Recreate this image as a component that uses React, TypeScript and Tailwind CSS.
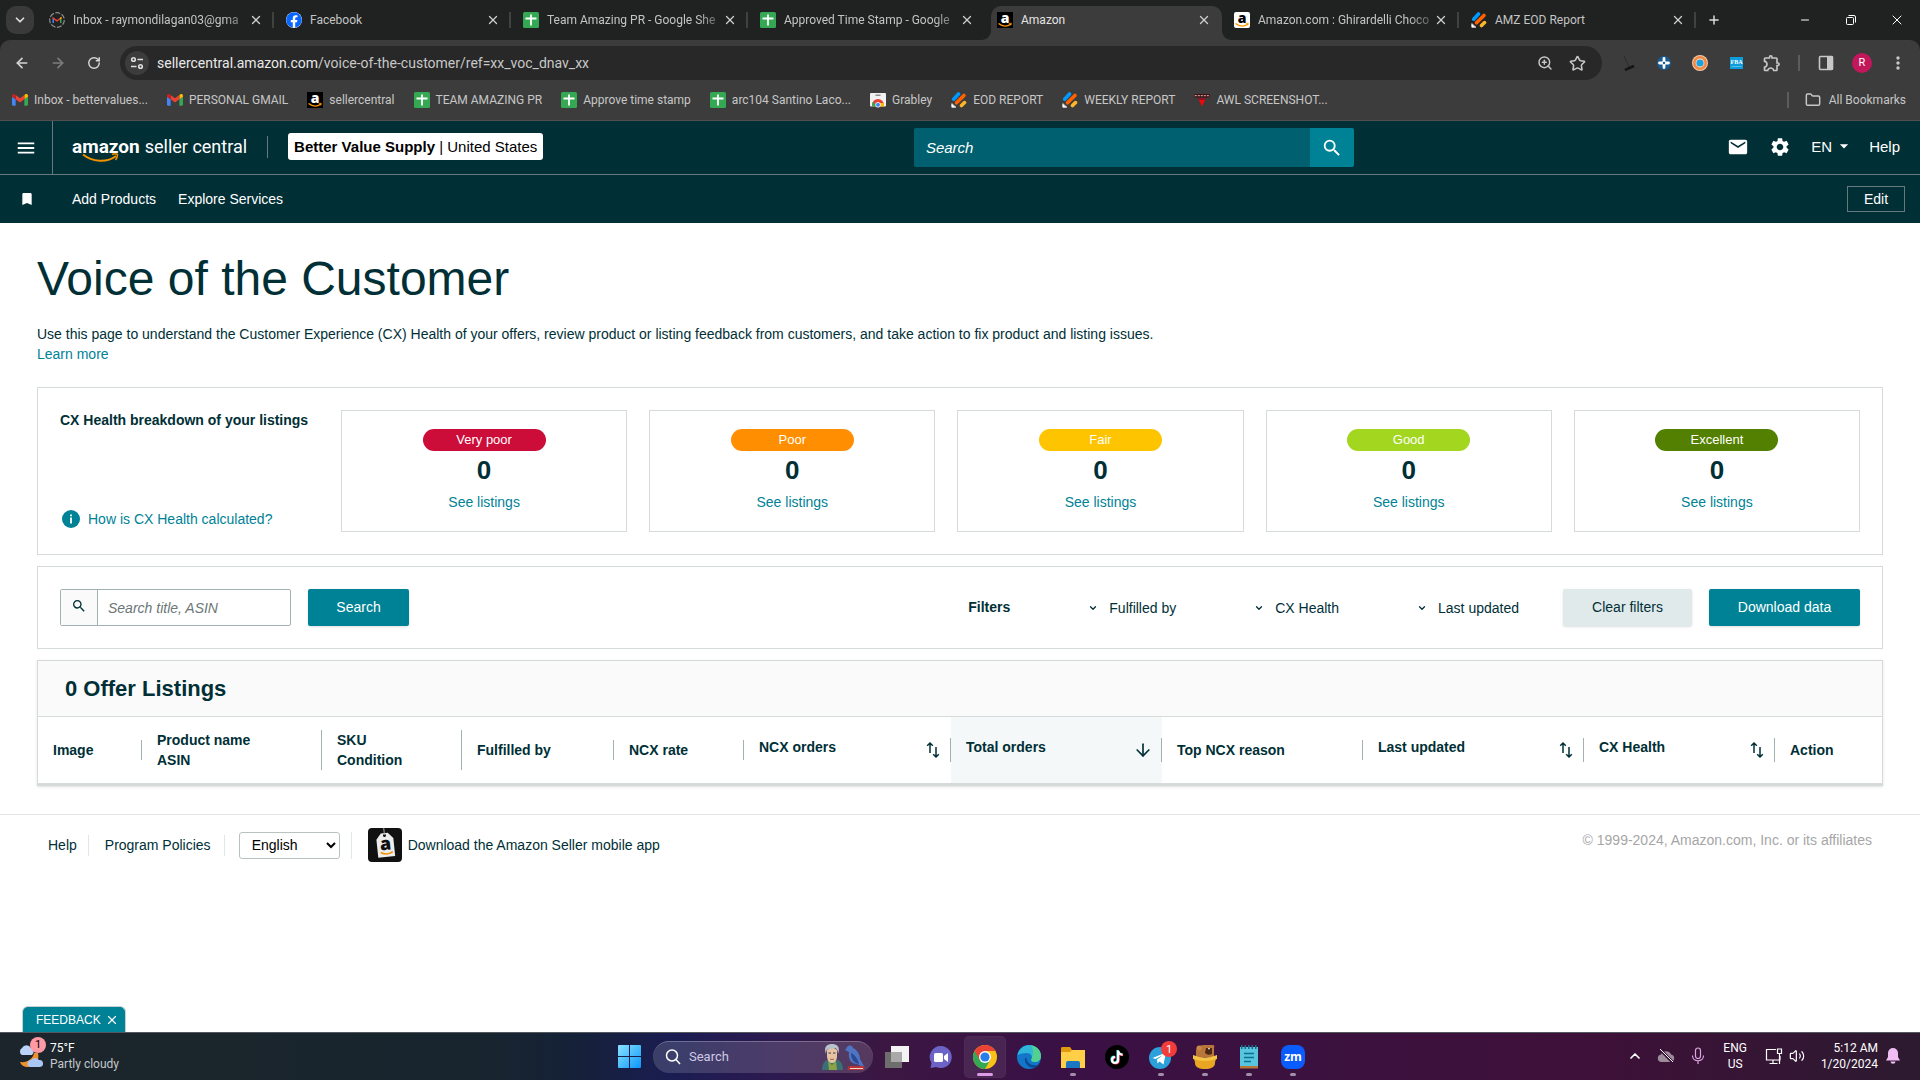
import type { ReactNode } from "react";
import {
  ArrowDown,
  ArrowLeft,
  ArrowRight,
  ChevronDown,
  ChevronUp,
  Folder,
  Minus,
  Plus,
  RotateCw,
  Star,
  Volume2,
  X,
  ZoomIn,
} from "lucide-react";
import {
  MdArrowDropDown,
  MdBookmark,
  MdMail,
  MdMenu,
  MdMoreVert,
  MdOutlineExtension,
  MdSearch,
  MdSettings,
} from "react-icons/md";
import { FaFacebook } from "react-icons/fa";

/* ---------- site icons ---------- */

function GmailIcon() {
  return (
    <svg viewBox="0 0 24 24" className="size-4 shrink-0" aria-hidden="true">
      <path fill="#4285f4" d="M0 7v11.9c0 .9.7 1.6 1.6 1.6h3.9V11z" />
      <path fill="#34a853" d="M18.5 20.5h3.9c.9 0 1.6-.7 1.6-1.6V7l-5.5 4z" />
      <path fill="#fbbc04" d="M18.5 4.4V11L24 7V5.4c0-2-2.3-3.2-3.9-2z" />
      <path fill="#ea4335" d="M5.5 11V4.4l6.5 4.9 6.5-4.9V11L12 15.9z" />
      <path fill="#c5221f" d="M0 5.4V7l5.5 4V4.4L3.9 3.4C2.3 2.2 0 3.3 0 5.4z" />
    </svg>
  );
}

function LoadingGmailIcon() {
  return (
    <svg viewBox="0 0 16 16" className="size-4 shrink-0" aria-hidden="true">
      <circle cx="8" cy="8" r="7.3" fill="none" stroke="#8b8b8b" strokeWidth="1.2" strokeDasharray="5 1.5" />
      <path fill="#4285f4" d="M3.5 6v5H5V7z" />
      <path fill="#34a853" d="M11 11h1.5V6L11 7z" />
      <path fill="#ea4335" d="M3.5 4.8L8 8l4.5-3.2v1.7L8 9.8 3.5 6.5z" />
      <path fill="#fbbc04" d="M11 5.9v1.7l1.5-1.1V4.8z" />
    </svg>
  );
}

function FacebookIcon() {
  return (
    <span className="flex size-4 shrink-0 rounded-full bg-white">
      <FaFacebook className="size-4 text-[#0866ff]" />
    </span>
  );
}

function SheetsIcon() {
  return (
    <svg viewBox="0 0 16 16" className="size-4 shrink-0" aria-hidden="true">
      <rect width="16" height="16" rx="1.5" fill="#34a853" />
      <path d="M8 2.5v11M2.500 6.500h11" stroke="#fff" strokeWidth="1.8" />
    </svg>
  );
}

function AmazonIcon({ light = false }: { light?: boolean }) {
  return (
    <svg viewBox="0 0 16 16" className="size-4 shrink-0" aria-hidden="true">
      <rect width="16" height="16" rx={light ? 2 : 0} fill={light ? "#fff" : "#000"} />
      <text x="8" y="10.5" textAnchor="middle" fontFamily="Open Sans" fontWeight="800" fontSize="14" fill={light ? "#000" : "#fff"}>
        a
      </text>
      <path d="M2 11.8c3.500 3 8.500 3 11.500.5" stroke="#ff9900" strokeWidth="1.4" fill="none" strokeLinecap="round" />
      <path d="M11.8 11.5l2.500-.3-.5 2.300" stroke="#ff9900" strokeWidth=".8" fill="none" />
    </svg>
  );
}

function JotformIcon() {
  return (
    <svg viewBox="0 0 16 16" className="size-4 shrink-0" aria-hidden="true" strokeLinecap="round">
      <path d="M2.7 7.2L7.5 2" stroke="#0099ff" strokeWidth="3.6" />
      <path d="M5.5 10.8L13 3.500" stroke="#ff6100" strokeWidth="3.6" />
      <path d="M10.5 13.6l3-3" stroke="#ffb629" strokeWidth="3.6" />
      <path d="M.8 12v3.2H4.5z" fill="#fff" stroke="#fff" strokeWidth=".8" />
    </svg>
  );
}

function WebStoreIcon() {
  return (
    <svg viewBox="0 0 16 16" className="size-4 shrink-0" aria-hidden="true">
      <rect y="1" width="16" height="13.5" rx="1" fill="#f1f1f1" />
      <path d="M5.5 3.2h5" stroke="#777" strokeWidth="1.2" />
      <path d="M2 14.5V13a6 6 0 0 1 12 0v1.500z" fill="#e94235" />
      <path d="M2 14.5V13q0-2 1-3.500l3.500 5z" fill="#34a853" />
      <path d="M14 14.5V13q0-1-.5-2H9v3.500z" fill="#fbbc04" />
      <circle cx="8" cy="12.8" r="2.400" fill="#4285f4" stroke="#fff" strokeWidth=".8" />
    </svg>
  );
}

function FlagIcon() {
  return (
    <svg viewBox="0 0 16 16" className="size-4 shrink-0" aria-hidden="true">
      <path d="M.5 2h15v3.500h-15z" fill="#3a1013" />
      <path d="M.8 3.600h14.500" stroke="#d09a9a" strokeWidth="1.2" strokeDasharray="2 1" />
      <path d="M3.500 6h9l-1.200 2H4.700z" fill="#8e1523" />
      <path d="M5 8h6l-3 6.500z" fill="#f00808" />
    </svg>
  );
}

function SortIcon() {
  return (
    <svg viewBox="0 0 14 18" className="h-[18px] w-3.5" fill="none" stroke="#002f36" strokeWidth="1.5" aria-hidden="true">
      <path d="M4 12V2M1.200 4.800L4 2l2.800 2.800M10 6v10M7.200 13.200L10 16l2.800-2.800" />
    </svg>
  );
}

/* ---------- browser chrome ---------- */

type Tab = { title: string; icon: ReactNode; active?: boolean; line?: boolean; fade?: boolean };

const tabs: Tab[] = [
  { title: "Inbox - raymondilagan03@gma", icon: <LoadingGmailIcon />, line: true, fade: true },
  { title: "Facebook", icon: <FacebookIcon />, line: true },
  { title: "Team Amazing PR - Google She", icon: <SheetsIcon />, line: true, fade: true },
  { title: "Approved Time Stamp - Google", icon: <SheetsIcon />, fade: true },
  { title: "Amazon", icon: <AmazonIcon />, active: true },
  { title: "Amazon.com : Ghirardelli Choco", icon: <AmazonIcon light />, line: true, fade: true },
  { title: "AMZ EOD Report", icon: <JotformIcon />, line: true },
];

function TabFoot({ flip = false }: { flip?: boolean }) {
  return (
    <svg
      viewBox="0 0 10 10"
      className={flip ? "absolute bottom-0 left-full size-2.5 -scale-x-100" : "absolute right-full bottom-0 size-2.5"}
      aria-hidden="true"
    >
      <path d="M10 0v10H0C6 10 10 6 10 0z" fill="#3c3c3c" />
    </svg>
  );
}

function TabStrip() {
  return (
    <div className="flex h-10 items-end bg-[#1f2220] pl-1.5">
      <button aria-label="Search tabs" className="mb-1.5 flex size-7 shrink-0 items-center justify-center rounded-[10px] bg-[#3a3a3a]">
        <ChevronDown className="size-3.5 text-[#dedede]" strokeWidth={3} />
      </button>
      <div className="ml-[5px] flex min-w-0">
        {tabs.map((t) => (
          <div key={t.title} className="w-[237px] min-w-0 pr-0.5 pl-1">
            <div className={`relative flex h-[34px] items-center pb-1.5 pl-1.5 ${t.active ? "rounded-t-[10px] bg-[#3c3c3c]" : ""}`}>
              {t.active && <TabFoot />}
              {t.active && <TabFoot flip />}
              {t.icon}
              <span
                className={`ml-2 flex-1 whitespace-nowrap ${t.active ? "text-[#e3e3e3]" : "text-[#c4c4c4]"} ${t.fade ? "[mask-image:linear-gradient(to_right,black_86%,rgba(0,0,0,0.25))]" : ""}`}
              >
                {t.title}
              </span>
              <button aria-label={`Close ${t.title}`} className="mr-2 flex size-4 shrink-0 items-center justify-center">
                <X className="size-3.5 text-[#d0d0d0]" strokeWidth={2.2} />
              </button>
              <span className={`h-4 w-0.5 ${t.line ? "bg-[#404240]" : "bg-transparent"}`} />
            </div>
          </div>
        ))}
      </div>
      <button aria-label="New tab" className="mb-1.5 ml-0.5 flex size-7 items-center justify-center">
        <Plus className="size-3.5 text-[#dedede]" strokeWidth={2.5} />
      </button>
      <div className="ml-auto flex h-10 text-white">
        <button aria-label="Minimize" className="flex w-[46px] items-center justify-center">
          <Minus className="size-3" strokeWidth={2} />
        </button>
        <button aria-label="Restore" className="flex w-[46px] items-center justify-center">
          <svg viewBox="0 0 10 10" className="size-2.5" fill="none" stroke="#fff" aria-hidden="true">
            <rect x=".5" y="2.5" width="7" height="7" rx="1" />
            <path d="M2.500.5H8a1.500 1.500 0 0 1 1.500 1.500v5.500" />
          </svg>
        </button>
        <button aria-label="Close window" className="flex w-[46px] items-center justify-center">
          <X className="size-4" strokeWidth={1.5} />
        </button>
      </div>
    </div>
  );
}

function Toolbar() {
  return (
    <div className="bg-[#1f2220]">
      <div className="flex h-[46px] items-center rounded-t-[10px] bg-[#3c3c3c] px-1">
        <button aria-label="Back" className="flex w-9 justify-center text-[#d6d6d6]">
          <ArrowLeft className="size-4" strokeWidth={2.5} />
        </button>
        <button aria-label="Forward" className="flex w-9 justify-center text-[#7d7d7d]">
          <ArrowRight className="size-4" strokeWidth={2.5} />
        </button>
        <button aria-label="Reload" className="flex w-9 justify-center text-[#d6d6d6]">
          <RotateCw className="size-3.5" strokeWidth={2.5} />
        </button>
        <div className="ml-2 flex h-[34px] flex-1 items-center rounded-full bg-[#282828] px-[5px]">
          <button aria-label="View site information" className="flex size-6 items-center justify-center rounded-full bg-[#3c3c3c]">
            <svg viewBox="0 0 14 14" className="size-3.5" fill="none" stroke="#dedede" strokeWidth="1.6" aria-hidden="true">
              <circle cx="3.5" cy="3.5" r="1.8" />
              <path d="M7.500 3.500H13M1 10.500h5.500" />
              <circle cx="10.5" cy="10.5" r="1.8" />
            </svg>
          </button>
          <p className="ml-2 flex-1 text-sm text-[#c7c7c7]">
            <span className="text-[#e8e8e8]">sellercentral.amazon.com</span>/voice-of-the-customer/ref=xx_voc_dnav_xx
          </p>
          <button aria-label="Zoom" className="flex w-8 justify-center text-[#c7c7c7]">
            <ZoomIn className="size-4" strokeWidth={2.2} />
          </button>
          <button aria-label="Bookmark this tab" className="mr-1 flex w-8 justify-center text-[#c7c7c7]">
            <Star className="size-[17px]" strokeWidth={2.2} />
          </button>
        </div>
        <div className="ml-2 flex items-center">
          <button aria-label="Broom extension" className="flex w-9 justify-center">
            <svg viewBox="0 0 16 16" className="size-4" aria-hidden="true">
              <path d="M4 1l5 11" stroke="#2a2a2a" />
              <path d="M5 15l9-4" stroke="#151515" strokeWidth="2.5" />
            </svg>
          </button>
          <button aria-label="Helium extension" className="flex w-9 justify-center">
            <svg viewBox="0 0 16 16" className="size-4" aria-hidden="true">
              <circle cx="8" cy="8" r="7" fill="#1b5a8e" />
              <path d="M8 3.500v9M3.500 8h9" stroke="#fff" strokeWidth="2.8" strokeLinecap="round" />
              <circle cx="8" cy="8" r="1.2" fill="#1b5a8e" />
            </svg>
          </button>
          <button aria-label="Ring extension" className="flex w-9 justify-center">
            <svg viewBox="0 0 16 16" className="size-4" aria-hidden="true">
              <circle cx="8" cy="8" r="8" fill="#f6c9a6" />
              <circle cx="8" cy="8" r="7" fill="#ef8a45" />
              <circle cx="8" cy="8" r="4.4" fill="#fbe3cf" />
              <circle cx="8" cy="8" r="3.6" fill="#1ba0e0" />
            </svg>
          </button>
          <button aria-label="FBA calculator" className="flex w-9 justify-center">
            <svg viewBox="0 0 13 12" className="h-3 w-[13px]" aria-hidden="true">
              <rect width="13" height="12" fill="#0d9ddb" />
              <text x="6.5" y="7" textAnchor="middle" fontFamily="Liberation Serif" fontWeight="700" fontSize="6" fill="#fff">
                FBA
              </text>
              <path d="M1.500 9.500h10" stroke="#6cc6ea" strokeWidth=".8" />
            </svg>
          </button>
          <button aria-label="Extensions" className="flex w-9 justify-center text-[#c7c7c7]">
            <MdOutlineExtension className="size-5" />
          </button>
          <span className="mx-2 h-4 w-0.5 bg-[#5c5c5c]" />
          <button aria-label="Side panel" className="flex w-9 justify-center">
            <svg viewBox="0 0 16 16" className="size-4" aria-hidden="true">
              <rect x="1.5" y="1.5" width="13" height="13" rx="1" fill="none" stroke="#c7c7c7" strokeWidth="1.6" />
              <path d="M9 1h6v14H9z" fill="#c7c7c7" />
            </svg>
          </button>
          <button aria-label="Profile" className="flex w-9 justify-center">
            <span className="flex size-5 items-center justify-center rounded-full bg-[#c2185b] text-[11px] text-white">R</span>
          </button>
          <button aria-label="Browser menu" className="flex w-9 justify-center text-[#c7c7c7]">
            <MdMoreVert className="size-5" />
          </button>
        </div>
      </div>
    </div>
  );
}

const bookmarks: { label: string; icon: ReactNode }[] = [
  { label: "Inbox - bettervalues...", icon: <GmailIcon /> },
  { label: "PERSONAL GMAIL", icon: <GmailIcon /> },
  { label: "sellercentral", icon: <AmazonIcon /> },
  { label: "TEAM AMAZING PR", icon: <SheetsIcon /> },
  { label: "Approve time stamp", icon: <SheetsIcon /> },
  { label: "arc104 Santino Laco...", icon: <SheetsIcon /> },
  { label: "Grabley", icon: <WebStoreIcon /> },
  { label: "EOD REPORT", icon: <JotformIcon /> },
  { label: "WEEKLY REPORT", icon: <JotformIcon /> },
  { label: "AWL SCREENSHOT...", icon: <FlagIcon /> },
];

function BookmarksBar() {
  return (
    <div className="flex h-[35px] items-center gap-[19px] border-b border-[#4f4f4f] bg-[#3c3c3c] pr-3.5 pb-1.5 pl-3 text-[#c7c7c7]">
      {bookmarks.map((b) => (
        <a key={b.label} href="#" className="flex items-center gap-1.5 whitespace-nowrap">
          {b.icon}
          {b.label}
        </a>
      ))}
      <div className="ml-auto flex items-center">
        <span className="mr-4 h-4 w-0.5 bg-[#5c5c5c]" />
        <a href="#" className="flex items-center gap-2 whitespace-nowrap">
          <Folder className="size-4" strokeWidth={2.2} />
          All Bookmarks
        </a>
      </div>
    </div>
  );
}

/* ---------- seller central header ---------- */

function SellerHeader() {
  return (
    <header className="bg-[#002f36] text-sm text-white">
      <div className="flex h-[54px] items-center border-b border-[#66797c]">
        <div className="flex h-full w-[47.6%] items-center pb-0.5">
          <button aria-label="Menu" className="-mb-0.5 flex h-[53px] w-[53px] items-center justify-center border-r border-[#66797c]">
            <MdMenu className="size-[22px]" />
          </button>
          <a href="#" className="relative ml-[19px] flex items-baseline gap-[5px] font-[Roboto,sans-serif] text-lg leading-6">
            <span className="text-[19px] font-bold">amazon</span>
            <span>seller central</span>
            <svg viewBox="0 0 38 10" className="absolute top-[18px] left-2.5 h-2.5 w-[38px]" fill="none" stroke="#f29100" aria-hidden="true">
              <path d="M1 1.500c9 7.500 24 8.500 33 1.500" strokeWidth="2" />
              <path d="M30 1.500c2-.8 4-.8 5.500 0 0 2-.6 4-2 5.500" strokeWidth="1.5" />
            </svg>
          </a>
          <span className="ml-5 h-[22px] w-px bg-[#66797c]" />
          <button className="ml-5 flex h-[27px] items-center rounded-[3px] bg-white px-1.5 text-[15px] whitespace-nowrap text-black">
            <b>Better Value Supply</b>
            <span>&nbsp;| United States</span>
          </button>
        </div>
        <form className="flex h-[39px] w-[440px]" onSubmit={(e) => e.preventDefault()}>
          <input
            aria-label="Search Seller Central"
            placeholder="Search"
            className="min-w-0 flex-1 rounded-l-[2px] bg-[#006070] px-3 text-[15px] italic outline-none placeholder:text-white"
          />
          <button aria-label="Submit search" className="flex w-11 items-center justify-center rounded-r-[2px] bg-[#008296]">
            <MdSearch className="size-[22px]" />
          </button>
        </form>
        <div className="ml-auto flex items-center pr-5 pb-0.5">
          <button aria-label="Messages">
            <MdMail className="size-[22px]" />
          </button>
          <button aria-label="Settings" className="ml-5">
            <MdSettings className="size-[22px]" />
          </button>
          <button className="ml-5 flex items-center gap-0.5 text-[15px]">
            EN
            <MdArrowDropDown className="size-5" />
          </button>
          <a href="#" className="ml-[15px] text-[15px]">
            Help
          </a>
        </div>
      </div>
      <nav className="flex h-12 items-center pr-[15px]">
        <button aria-label="Favorites" className="flex w-[53px] justify-center">
          <MdBookmark className="size-4" />
        </button>
        <a href="#" className="ml-[19px]">
          Add Products
        </a>
        <a href="#" className="ml-[22px]">
          Explore Services
        </a>
        <button className="ml-auto h-[26px] w-[58px] border border-[#66797c]">Edit</button>
      </nav>
    </header>
  );
}

/* ---------- page content ---------- */

const health = [
  { label: "Very poor", color: "bg-[#cc0c39]" },
  { label: "Poor", color: "bg-[#ff8f00]" },
  { label: "Fair", color: "bg-[#ffc400]" },
  { label: "Good", color: "bg-[#a2d61f]" },
  { label: "Excellent", color: "bg-[#538000]" },
];

function HealthPanel() {
  return (
    <section className="mt-[23px] flex border border-[#d5dbdb] p-[22px]">
      <div className="flex w-[281px] shrink-0 flex-col justify-between pb-[3px]">
        <h2 className="font-bold">CX Health breakdown of your listings</h2>
        <a href="#" className="flex items-center gap-2 text-[#008296]">
          <svg viewBox="0 0 18 18" className="ml-0.5 size-[18px]" aria-hidden="true">
            <circle cx="9" cy="9" r="9" fill="#008296" />
            <path d="M9 7.500v6M9 4.500v1.800" stroke="#fff" strokeWidth="1.8" />
          </svg>
          How is CX Health calculated?
        </a>
      </div>
      <div className="grid flex-1 grid-cols-5 gap-[22px]">
        {health.map((h) => (
          <div key={h.label} className="flex flex-col items-center border border-[#d5dbdb] pt-[18px] pb-[19px]">
            <span className={`h-[22px] w-[123px] rounded-full text-center text-[13px] leading-[22px] text-white ${h.color}`}>{h.label}</span>
            <span className="mt-[7px] text-[26px] leading-6 font-bold">0</span>
            <a href="#" className="mt-2.5 text-[#008296]">
              See listings
            </a>
          </div>
        ))}
      </div>
    </section>
  );
}

function FilterButton({ label }: { label: string }) {
  return (
    <button className="ml-[78px] flex items-center gap-[11px] whitespace-nowrap">
      <ChevronDown className="size-2.5" strokeWidth={3} />
      {label}
    </button>
  );
}

function FilterPanel() {
  return (
    <section className="mt-[11px] flex items-center border border-[#d5dbdb] p-[22px]">
      <form className="flex" onSubmit={(e) => e.preventDefault()}>
        <div className="flex h-[37px] w-[231px] rounded-[2px] border border-[#a2b2b2]">
          <span className="flex w-[37px] items-center justify-center border-r border-[#a2b2b2] bg-[#fafafa] pb-1">
            <MdSearch className="size-4" />
          </span>
          <input
            aria-label="Search title or ASIN"
            placeholder="Search title, ASIN"
            className="min-w-0 flex-1 px-2.5 italic outline-none placeholder:text-[#6b7778]"
          />
        </div>
        <button className="ml-[17px] h-[37px] w-[101px] rounded-[2px] bg-[#008296] pb-0.5 text-white shadow-sm">Search</button>
      </form>
      <div className="ml-auto flex items-center">
        <span className="pb-0.5 font-bold">Filters</span>
        <FilterButton label="Fulfilled by" />
        <FilterButton label="CX Health" />
        <FilterButton label="Last updated" />
        <button className="ml-11 h-[37px] w-[129px] rounded-[2px] bg-[#e1eaeb] pb-0.5 shadow-sm">Clear filters</button>
        <button className="ml-[17px] h-[37px] w-[151px] rounded-[2px] bg-[#008296] pb-0.5 text-white shadow-sm">Download data</button>
      </div>
    </section>
  );
}

type Column = { label: string; second?: string; width: string; sort?: "both" | "down"; last?: boolean };

const columns: Column[] = [
  { label: "Image", width: "w-[104px]" },
  { label: "Product name", second: "ASIN", width: "w-[180px]" },
  { label: "SKU", second: "Condition", width: "w-[140px]" },
  { label: "Fulfilled by", width: "w-[152px]" },
  { label: "NCX rate", width: "w-[130px]" },
  { label: "NCX orders", width: "w-[207px]", sort: "both" },
  { label: "Total orders", width: "w-[211px]", sort: "down" },
  { label: "Top NCX reason", width: "w-[201px]" },
  { label: "Last updated", width: "w-[221px]", sort: "both" },
  { label: "CX Health", width: "w-[191px]", sort: "both" },
  { label: "Action", width: "w-[107px]", last: true },
];

function ListingsPanel() {
  return (
    <section className="mt-[11px] border border-b-[3px] border-[#d5dbdb] shadow">
      <h2 className="flex h-14 items-center border-b border-[#d5dbdb] bg-[#fafafa] px-[27px] text-[22px] font-bold">0 Offer Listings</h2>
      <table className="w-full table-fixed">
        <thead>
          <tr className="h-[66px] text-left">
            {columns.map((c) => (
              <th key={c.label} className={`p-0 align-middle ${c.width} ${c.sort === "down" ? "bg-[#f4f8f9]" : ""}`}>
                <div className={`pl-[15px] ${c.last ? "" : "border-r border-[#a2b2b2]"}`}>
                  {c.sort ? (
                    <button className="flex h-6 w-full items-center justify-between pr-2.5 font-bold">
                      <span className="pb-1.5">{c.label}</span>
                      {c.sort === "both" ? <SortIcon /> : <ArrowDown className="-mr-0.5 size-5" strokeWidth={2} />}
                    </button>
                  ) : (
                    <>
                      {c.label}
                      {c.second && <br />}
                      {c.second}
                    </>
                  )}
                </div>
              </th>
            ))}
          </tr>
        </thead>
      </table>
    </section>
  );
}

function Footer() {
  return (
    <footer className="mt-7 flex items-start justify-between border-t border-[#e3e6e6] px-12 pt-[13px]">
      <div className="flex items-center">
        <a href="#">Help</a>
        <span className="ml-[11px] h-[21px] w-px bg-[#e3e6e6]" />
        <a href="#" className="ml-4">
          Program Policies
        </a>
        <span className="ml-[13px] h-[21px] w-px bg-[#e3e6e6]" />
        <select
          aria-label="Language"
          className="ml-3.5 h-[27px] w-[101px] rounded-[3px] border border-[#b9c1c1] bg-white pl-2 text-black"
          defaultValue="English"
        >
          <option>English</option>
        </select>
        <span className="ml-[11px] h-[27px] w-px bg-[#e3e6e6]" />
        <a href="#" className="ml-4 flex items-center gap-1.5">
          <svg viewBox="0 0 34 34" className="size-[34px]" aria-hidden="true">
            <rect width="34" height="34" rx="4" fill="#111" />
            <g transform="rotate(-6 17 17)">
              <path d="M9 11l5-6h7l5 6v18H9z" fill="#ededed" />
              <circle cx="17.5" cy="7.5" r="1.5" fill="#111" />
              <path d="M17.500 7V0" stroke="#aaa" />
              <text x="17.5" y="22" textAnchor="middle" fontFamily="Open Sans" fontWeight="800" fontSize="18" fill="#111">
                a
              </text>
              <path d="M12 24c4 2.800 8 2.800 12 .3" stroke="#f29100" strokeWidth="1.6" fill="none" />
            </g>
          </svg>
          Download the Amazon Seller mobile app
        </a>
      </div>
      <p className="pt-0.5 text-[#a6a6a6]">© 1999-2024, Amazon.com, Inc. or its affiliates</p>
    </footer>
  );
}

/* ---------- taskbar ---------- */

function WeatherIcon() {
  return (
    <span className="relative flex">
      <svg viewBox="0 0 28 30" className="h-[30px] w-7" aria-hidden="true">
        <path d="M20 12c2 8-3 14-10 14-4 0-7-2-8-5 7 1 13-3 14-9z" fill="#f0902c" />
        <path d="M4 14a4 4 0 0 1 0-7 5 5 0 0 1 9 0 4 4 0 0 1 1 7z" fill="#bcd2f7" />
        <path d="M13 26a3.500 3.500 0 0 1 0-7 5 5 0 0 1 8 0 3.500 3.500 0 0 1 1 7z" fill="#a9c6f5" />
      </svg>
      <span className="absolute -top-1 right-0 flex size-4 items-center justify-center rounded-full bg-[#ff99a4] text-[11px] text-black">1</span>
    </span>
  );
}

const taskbarApps: { name: string; art: ReactNode; dot?: boolean; active?: boolean }[] = [
  {
    name: "Task view",
    art: (
      <>
        <rect x="0" y="7" width="17" height="16" fill="#6e6e6e" />
        <rect x="6" y="1" width="18" height="16" fill="#f3f3f3" />
        <rect x="6" y="7" width="11" height="10" fill="#a9a9a9" />
      </>
    ),
  },
  {
    name: "Chat",
    art: (
      <>
        <path d="M12 1a11 11 0 1 1-5 20.900L1.500 23l1-5A11 11 0 0 1 12 1z" fill="#6c63c7" />
        <rect x="5" y="8" width="9" height="9" rx="1.5" fill="#fff" />
        <path d="M15 11l4-3v9l-4-3z" fill="#fff" />
      </>
    ),
  },
  {
    name: "Google Chrome",
    active: true,
    art: (
      <>
        <circle cx="12" cy="12" r="12" fill="#fbc116" />
        <path d="M12 12L1.600 6A12 12 0 0 0 12 24l5.200-9z" fill="#34a853" />
        <path d="M12 12V6h10.400A12 12 0 0 0 1.600 6L6.800 15z" fill="#ea4335" />
        <circle cx="12" cy="12" r="6" fill="#fff" />
        <circle cx="12" cy="12" r="4.6" fill="#2a7de9" />
      </>
    ),
  },
  {
    name: "Microsoft Edge",
    art: (
      <>
        <circle cx="12" cy="12" r="12" fill="#1277c9" />
        <path d="M.5 10C2 4 6.500 0 12 0c7 0 12 5 12 11 0 4-3 6-6.500 6-3 0-4-1.500-3-3 1.500-3-1-6-5-6-4 0-7 1-9 2z" fill="#2fb4dc" />
        <path d="M14 .2c6 1 10 5.500 10 10.800 0 4-3 6-6.500 6-3 0-4-1.500-3-3C16 10 17 5 14 .2z" fill="#5fd97a" opacity=".75" />
        <path d="M8 13c-1 6 4 10.500 10 9.500 1.500-.5 3-1.500 4-3-6 2-12-.5-12.500-6.500z" fill="#0b4a94" />
      </>
    ),
  },
  {
    name: "File Explorer",
    dot: true,
    art: (
      <>
        <path d="M0 3.500C0 2.500.7 2 1.500 2H9l2 3v4H0z" fill="#e09a10" />
        <path d="M0 7h9l2-2h13v18H0z" fill="#ffcf48" />
        <path d="M5 23v-5a2 2 0 0 1 2-2h10a2 2 0 0 1 2 2v5z" fill="#1c77c3" />
      </>
    ),
  },
  {
    name: "TikTok",
    art: (
      <>
        <circle cx="12" cy="12" r="12" fill="#000" />
        <g fill="none" strokeWidth="2.2">
          <path d="M12.500 5v9.500a3 3 0 1 1-3-3M12.500 5c.2 2.500 2 4 4.500 4.200" stroke="#25f4ee" />
          <path d="M13.700 6v9.500a3 3 0 1 1-3-3M13.700 6c.2 2.500 2 4 4.500 4.200" stroke="#fe2c55" />
          <path d="M13.100 5.500V15a3 3 0 1 1-3-3M13.100 5.500c.2 2.500 2 4 4.500 4.200" stroke="#fff" />
        </g>
      </>
    ),
  },
  {
    name: "Telegram",
    dot: true,
    art: (
      <>
        <circle cx="11" cy="13" r="11" fill="#2ba0da" />
        <path d="M3.500 13L17 7.500l-2.500 12-4-3-2 2-.5-4 6-4.500-7.500 4z" fill="#fff" />
        <circle cx="20" cy="4" r="8" fill="#f23c3c" />
        <text x="20" y="8" textAnchor="middle" fontFamily="Roboto" fontSize="11" fill="#fff">
          1
        </text>
      </>
    ),
  },
  {
    name: "Honeypot",
    dot: true,
    art: (
      <>
        <path d="M3 12V6q0-6 8-6h9q2 0 1 3v9z" fill="#b9763a" />
        <circle cx="6" cy="3" r="2.5" fill="#c98748" />
        <path d="M13 3h6v6q-4 2-7-1z" fill="#4a2613" />
        <path d="M15 3l1 2 1-2z" fill="#fff" />
        <path d="M1 12q11 4 22 0c0 3-1 4-1 6 0 4-4 6-10 6S2 22 2 18c0-2-1-3-1-6z" fill="#e8a623" />
        <path d="M0 10q12 5 24 0v4q-12 4-24 0z" fill="#f6c344" />
      </>
    ),
  },
  {
    name: "Notepad",
    dot: true,
    art: (
      <>
        <path d="M3 2h18v20H3z" fill="#56c5dd" />
        <path d="M3 21h18v2.500H3z" fill="#b5763a" />
        <path d="M4 2h16" stroke="#1a6b8a" strokeWidth="4" strokeDasharray="1.5 2" />
        <path d="M7 8.500h10M7 12.500h10M7 16.500h7" stroke="#0e6f92" strokeWidth="1.5" />
      </>
    ),
  },
  {
    name: "Zoom",
    dot: true,
    art: (
      <>
        <rect width="24" height="24" rx="8" fill="#0b5cff" />
        <text x="12" y="16" textAnchor="middle" fontFamily="Open Sans" fontWeight="700" fontSize="12" fill="#fff">
          zm
        </text>
      </>
    ),
  },
];

function Taskbar() {
  return (
    <div className="grid h-12 grid-cols-[1fr_auto_1fr] items-center border-t border-[#55595f] bg-[linear-gradient(90deg,#1c252b_0%,#18252e_25%,#152138_30%,#1a1d52_35%,#2c1a50_40%,#3b1742_46%,#3a1145_54%,#3d1138_84%,#2c1a30_100%)] text-white">
      <button aria-label="Weather" className="flex items-center gap-1 pb-0.5 pl-[18px] text-left leading-4">
        <WeatherIcon />
        <span>
          75°F
          <br />
          <span className="text-[#c4c8cb]">Partly cloudy</span>
        </span>
      </button>
      <div className="flex items-center pl-0.5">
        <button aria-label="Start" className="flex w-11 justify-center">
          <svg viewBox="0 0 23 23" className="size-[23px]" aria-hidden="true">
            <linearGradient id="start" x1="0" y1="0" x2="1" y2="1">
              <stop offset="0" stopColor="#8be3ff" />
              <stop offset="1" stopColor="#0a97fb" />
            </linearGradient>
            <path fill="url(#start)" d="M0 1q0-1 1-1h10v11H0zM12 0h10q1 0 1 1v10H12zM0 12h11v11H1q-1 0-1-1zM12 12h11v10q0 1-1 1H12z" />
          </svg>
        </button>
        <label className="mx-0.5 flex h-8 w-[220px] items-center rounded-full border-t border-white/25 bg-white/15 pr-1.5 pl-3">
          <svg viewBox="0 0 16 16" className="size-4" fill="none" stroke="#fff" strokeWidth="1.5" aria-hidden="true">
            <circle cx="7" cy="6.5" r="5.5" />
            <path d="M11 10.500l4 4.500" />
          </svg>
          <input
            aria-label="Search"
            placeholder="Search"
            className="ml-2 min-w-0 flex-1 bg-transparent text-[13px] outline-none placeholder:text-[#cfc9e2]"
          />
          <svg viewBox="0 0 46 32" className="h-8 w-[46px]" aria-hidden="true">
            <path d="M1 29c0-7 3-10 8-11h5c5 1 8 4 8 11z" fill="#3b6f74" />
            <path d="M7 20l4 4 4-4 1 9H8z" fill="#8aa345" />
            <path d="M6 9q5-5 10 0v7q-1 6-5 6t-5-6z" fill="#e6c3a2" />
            <path d="M5 13C2 5 7 3 11 3s9 2 6 10q0-5-3-6-4 1-7 1-2 1-2 5z" fill="#b9c1cc" />
            <path d="M7.500 12h2.500M12 12h2.500" stroke="#4a3a33" strokeWidth="1.2" />
            <path d="M9 18q2 1 4 0" stroke="#a35f4a" fill="none" />
            <path d="M24 9l2-3c2-2 5-2 6 1 4 2 7 6 7 11l5 9-8-4c-6 0-9-5-8-12z" fill="#4f74c4" />
            <path d="M30 12c4 2 7 6 8 11-5-1-8-5-8-11z" fill="#2c4a94" />
            <path d="M28 25h15v4H26z" fill="#b8323a" />
            <path d="M29 27.500h13" stroke="#f0d9c8" />
          </svg>
        </label>
        {taskbarApps.map((a) => (
          <button
            key={a.name}
            aria-label={a.name}
            className={`relative mx-0.5 flex size-10 items-center justify-center rounded ${a.active ? "bg-white/8 ring-1 ring-white/10" : ""}`}
          >
            <svg viewBox="0 0 24 24" className="size-6 overflow-visible" aria-hidden="true">
              {a.art}
            </svg>
            {a.active && <span className="absolute bottom-px h-[3px] w-4 rounded-full bg-[#dd9be6]" />}
            {a.dot && <span className="absolute bottom-px h-[3px] w-1.5 rounded-full bg-[#a08fa6]" />}
          </button>
        ))}
      </div>
      <div className="flex items-center justify-end pr-5 pb-0.5 leading-4">
        <button aria-label="Show hidden icons">
          <ChevronUp className="size-4" strokeWidth={2.5} />
        </button>
        <svg viewBox="0 0 18 14" className="ml-3.5 h-3.5 w-[18px]" aria-hidden="true">
          <path d="M4 13a3.800 3.800 0 0 1 0-7.500 5.500 5.500 0 0 1 10 0A3.800 3.800 0 0 1 14 13z" fill="#9b8d9c" />
          <path d="M2.500 0l13 13" stroke="#3d1138" strokeWidth="3" />
          <path d="M3 0l13 13" stroke="#fff" />
        </svg>
        <svg viewBox="0 0 14 18" className="ml-4 h-[18px] w-3.5" fill="none" stroke="#dca6e2" strokeWidth="1.2" aria-hidden="true">
          <rect x="4.5" y="1" width="5" height="10.5" rx="2.5" />
          <path d="M1.500 8.500c0 7 11 7 11 0M7 14v3" />
        </svg>
        <button className="ml-[18px] text-center">
          ENG
          <br />
          US
        </button>
        <svg viewBox="0 0 18 18" className="ml-[18px] size-[18px]" fill="none" stroke="#fff" strokeWidth="1.2" aria-hidden="true">
          <path d="M11 2.500H1.500v10.500H15V9M8 13v3M4.500 16.500h8M12.500 2h4v4.500h-4zM14.500 6.500V17" />
        </svg>
        <Volume2 className="ml-1.5 size-4" strokeWidth={1.8} />
        <p className="ml-4 text-right">
          5:12 AM
          <br />
          1/20/2024
        </p>
        <svg viewBox="0 0 14 16" className="ml-2 h-4 w-3.5" fill="#f0bdf3" aria-hidden="true">
          <path d="M7 0a5 5 0 0 1 5 5v4l2 3.500H0L2 9V5a5 5 0 0 1 5-5zM4.500 13.500h5a2.500 2.200 0 0 1-5 0z" />
        </svg>
      </div>
    </div>
  );
}

export default function App() {
  return (
    <div className="flex min-h-screen flex-col bg-white font-[Roboto,'Noto_Sans',sans-serif] text-xs">
      <TabStrip />
      <Toolbar />
      <BookmarksBar />
      <div className="relative flex flex-1 flex-col font-['Liberation_Sans',Arial,sans-serif] text-sm leading-5 text-[#002f36]">
        <SellerHeader />
        <main className="px-[37px]">
          <h1 className="mt-7 text-5xl leading-[56px]">Voice of the Customer</h1>
          <p className="mt-[17px]">
            Use this page to understand the Customer Experience (CX) Health of your offers, review product or listing feedback from customers, and
            take action to fix product and listing issues.
          </p>
          <a href="#" className="block text-[#008296]">
            Learn more
          </a>
          <HealthPanel />
          <FilterPanel />
          <ListingsPanel />
        </main>
        <Footer />
        <div className="absolute bottom-0 left-[22px] flex h-[26px] items-center gap-1 rounded-t-md border border-b-0 border-[#c9d2d3] bg-[#008296] pr-1.5 pl-[13px] text-xs text-white">
          <button>FEEDBACK</button>
          <button aria-label="Dismiss feedback">
            <X className="size-3.5" strokeWidth={2} />
          </button>
        </div>
      </div>
      <Taskbar />
    </div>
  );
}
